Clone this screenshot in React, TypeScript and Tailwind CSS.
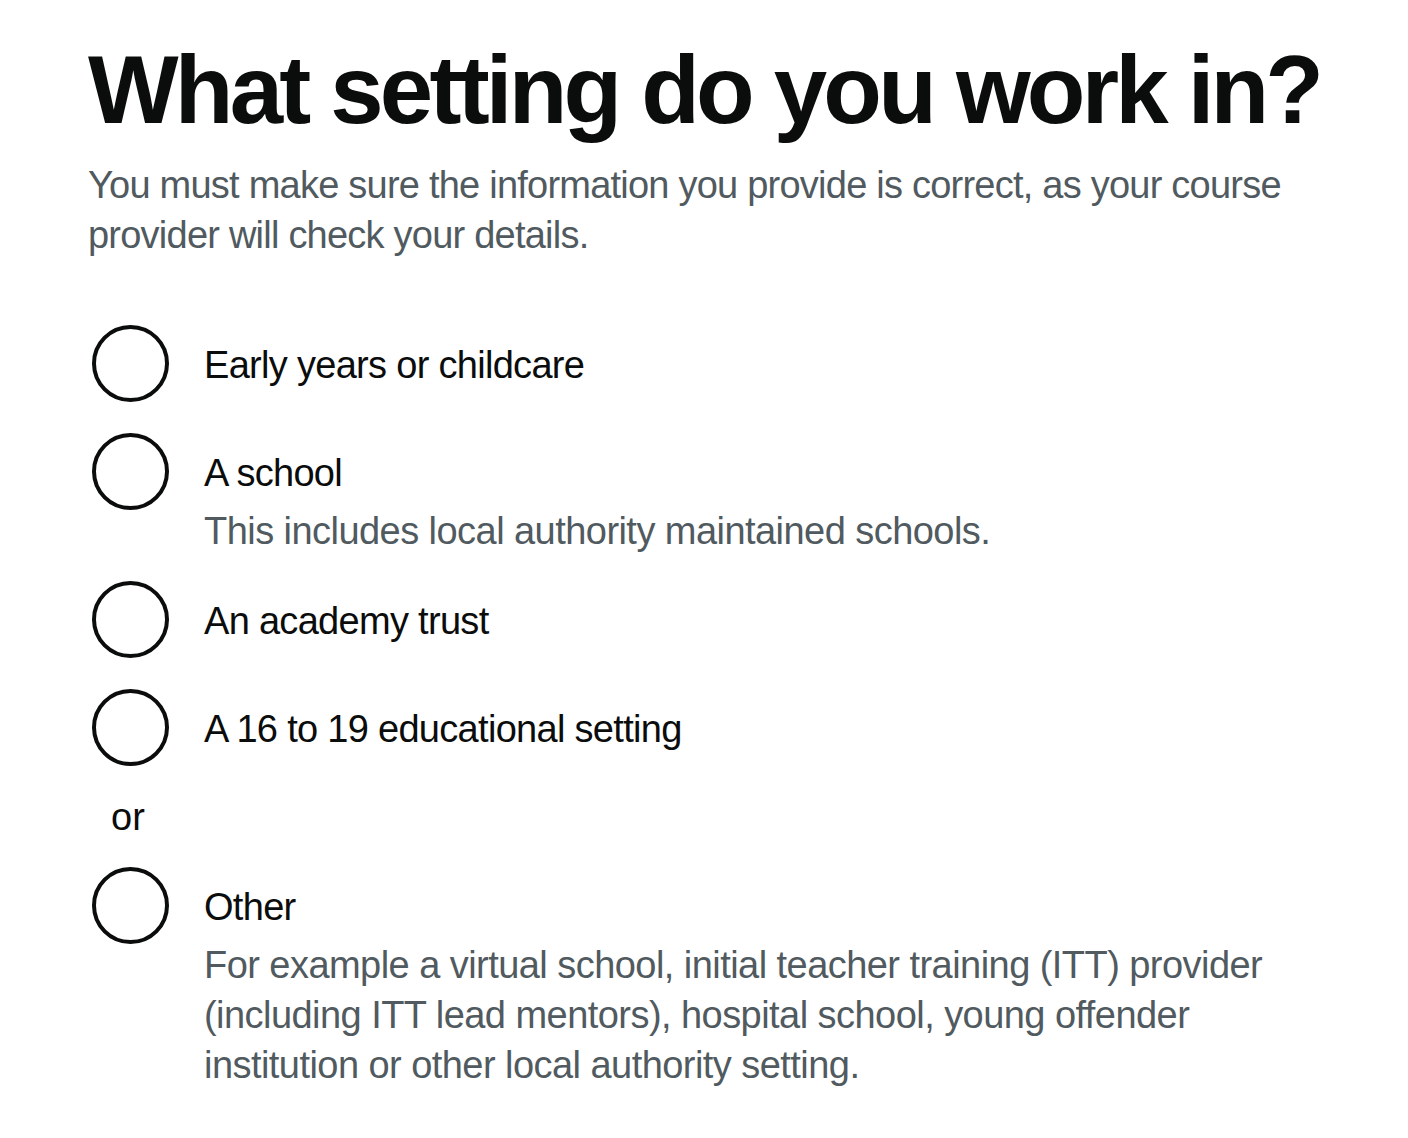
const font = { fontFamily: '"Liberation Sans", Arial, sans-serif' }

type Option = { label: string; hint?: string[] }

const options: Option[] = [
  { label: "Early years or childcare" },
  { label: "A school", hint: ["This includes local authority maintained schools."] },
  { label: "An academy trust" },
  { label: "A 16 to 19 educational setting" },
]

const other: Option = {
  label: "Other",
  hint: [
    "For example a virtual school, initial teacher training (ITT) provider",
    "(including ITT lead mentors), hospital school, young offender",
    "institution or other local authority setting.",
  ],
}

function RadioItem({ opt }: { opt: Option }) {
  return (
    <label className="flex items-start gap-[35px] min-h-[83px] mb-[25px] ml-[4px] cursor-pointer">
      <span className="shrink-0 w-[77px] h-[77px] rounded-full border-4 border-[#0b0c0c] bg-white" />
      <span className="flex flex-col pt-[15px]">
        <span className="text-[38px] leading-[50px] text-[#0b0c0c] tracking-[-0.7px]">{opt.label}</span>
        {opt.hint && (
          <span className="mt-[8px] text-[38px] leading-[50px] text-[#505a5f] tracking-[-0.55px]">
            {opt.hint.map((line, i) => (
              <span key={i} className="block whitespace-nowrap">
                {line}
              </span>
            ))}
          </span>
        )}
      </span>
    </label>
  )
}

export default function App() {
  return (
    <div className="min-h-screen bg-white" style={font}>
      <main className="pl-[88px] pt-[40px] w-[1400px]">
        <h1 className="text-[96px] leading-[100px] font-bold text-[#0b0c0c] tracking-[-3.8px] whitespace-nowrap">
          What setting do you work in?
        </h1>
        <p className="mt-[20px] text-[38px] leading-[50px] text-[#505a5f] tracking-[-0.77px]">
          <span className="block whitespace-nowrap">
            You must make sure the information you provide is correct, as your course
          </span>
          <span className="block whitespace-nowrap">provider will check your details.</span>
        </p>

        <div className="mt-[65px]">
          {options.map((o) => (
            <RadioItem key={o.label} opt={o} />
          ))}
          <div className="w-[80px] text-center text-[38px] leading-[50px] text-[#0b0c0c] -mt-[5px] mb-[25px]">
            or
          </div>
          <RadioItem opt={other} />
        </div>
      </main>
    </div>
  )
}
